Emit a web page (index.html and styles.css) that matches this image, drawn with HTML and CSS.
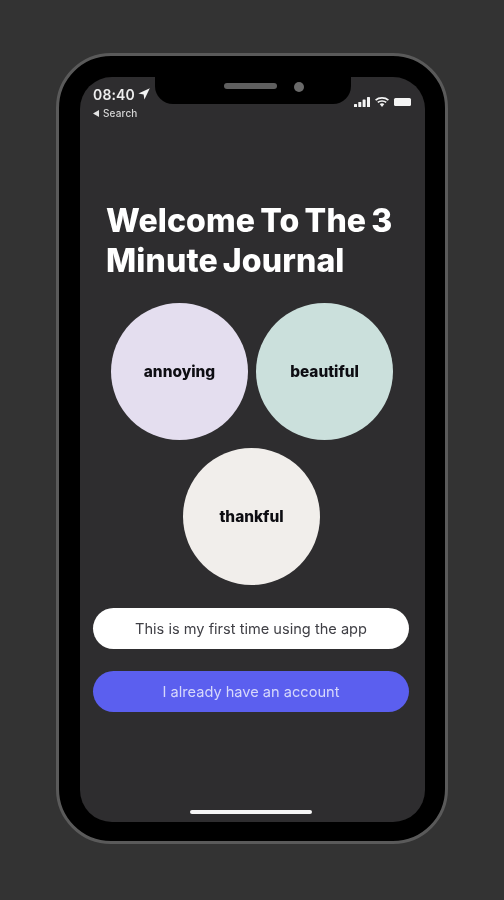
FILE: index.html
```html
<!DOCTYPE html>
<html lang="en">
<head>
<meta charset="utf-8">
<title>3 Minute Journal</title>
<link rel="stylesheet" href="styles.css">
</head>
<body>
<div class="phone">
  <div class="notch">
    <span class="speaker"></span>
    <span class="camera"></span>
  </div>
  <main class="screen">
    <header class="status">
      <div class="status-left">
        <div class="time">08:40
          <svg class="arrow" viewBox="0 0 12 12" width="12" height="12"><path d="M11.8 .2 L.4 5.6 L5.6 6.4 L6.4 11.6 Z" fill="#f4f4f4"/></svg>
        </div>
        <div class="back"><svg viewBox="0 0 6 7" width="6" height="7"><path d="M0 3.5 L6 0 V7 Z" fill="#e4e4e4"/></svg>Search</div>
      </div>
      <div class="status-right">
        <svg viewBox="0 0 16 10" width="16" height="10"><g fill="#f4f4f4"><rect x="0" y="7" width="3" height="3" rx=".6"/><rect x="4.3" y="5" width="3" height="5" rx=".6"/><rect x="8.6" y="2.5" width="3" height="7.5" rx=".6"/><rect x="13" y="0" width="3" height="10" rx=".6"/></g></svg>
        <svg viewBox="0 0 14 10" width="14" height="10"><g fill="none" stroke="#f4f4f4" stroke-width="1.7"><path d="M.6 3.2 C4 .2 10 .2 13.4 3.2"/><path d="M2.8 5.4 C5 3.5 9 3.5 11.2 5.4"/></g><path d="M4.7 7.1 C6 6 8 6 9.3 7.1 L7 10 Z" fill="#f4f4f4"/></svg>
        <span class="battery"></span>
      </div>
    </header>
    <h1 class="title">Welcome To The 3 Minute Journal</h1>
    <section class="bubbles">
      <div class="bubble lilac">annoying</div>
      <div class="bubble mint">beautiful</div>
      <div class="bubble cream">thankful</div>
    </section>
    <section class="actions">
      <button class="btn btn-white">This is my first time using the app</button>
      <button class="btn btn-blue">I already have an account</button>
    </section>
    <div class="home"></div>
  </main>
</div>
</body>
</html>
```
FILE: styles.css
```css
* { box-sizing: border-box; }
html, body { margin: 0; height: 100%; }
body {
  background: #333333;
  font-family: Inter, "Liberation Sans", sans-serif;
  padding: 53px 0 0 56px;
  overflow: hidden;
}
.phone {
  position: relative;
  width: 392px;
  height: 791px;
  padding: 21px 20px 19px 21px;
  background: #000;
  border: 3px solid #5a5a5a;
  border-radius: 55px;
  filter: blur(.35px);
}
.notch {
  position: absolute;
  left: 96px;
  top: 21px;
  width: 196px;
  height: 27px;
  background: #000;
  border-radius: 0 0 18px 18px;
}
.speaker {
  position: absolute;
  left: 69px;
  top: 6px;
  width: 53px;
  height: 6px;
  border-radius: 3px;
  background: #5f5f5f;
}
.camera {
  position: absolute;
  left: 139px;
  top: 5px;
  width: 10px;
  height: 10px;
  border-radius: 50%;
  background: #6a6a6a;
}
.screen {
  display: flex;
  flex-direction: column;
  height: 100%;
  background: #2e2d2f;
  border-radius: 32px;
  overflow: hidden;
}
.status {
  display: flex;
  justify-content: space-between;
  height: 46px;
  padding: 8px 14px 0 13px;
  color: #efefef;
}
.time {
  display: flex;
  align-items: center;
  gap: 3px;
  height: 18px;
  font-size: 14px;
  font-weight: 600;
  letter-spacing: .15px;
}
.back {
  display: flex;
  align-items: center;
  gap: 4px;
  margin-top: 4px;
  font-size: 10px;
  font-weight: 500;
  letter-spacing: .15px;
  color: #d6d6d6;
}
.status-right {
  display: flex;
  align-items: center;
  gap: 5px;
  height: 10px;
  margin-top: 12px;
}
.battery {
  width: 17px;
  height: 8px;
  border-radius: 1.5px;
  background: #f4f4f4;
}
.title {
  margin: 78px 0 0;
  padding: 0 26px;
  font-size: 32px;
  line-height: 40px;
  font-weight: 800;
  letter-spacing: .12px;
  word-spacing: -2px;
  color: #fff;
}
.bubbles {
  display: grid;
  grid-template-columns: 137px 137px;
  justify-content: start;
  gap: 8px;
  margin-top: 22px;
  padding-left: 31px;
}
.bubble {
  display: flex;
  align-items: center;
  justify-content: center;
  height: 137px;
  border-radius: 50%;
  font-size: 15.4px;
  font-weight: 800;
  color: #0d0d12;
}
.lilac { background: #e4deef; }
.mint { background: #cbe0dc; }
.cream {
  grid-column: 1 / -1;
  justify-self: start;
  width: 137px;
  margin-left: 72px;
  background: #f1eeeb;
}
.actions {
  display: flex;
  flex-direction: column;
  gap: 22px;
  margin-top: 23px;
  padding: 0 16px 0 13px;
}
.btn {
  height: 41px;
  border: 0;
  border-radius: 21px;
  font-family: inherit;
  font-size: 14.6px;
}
.btn-white { background: #fff; color: #3f3f45; }
.btn-blue { background: #5b5fef; color: #d6d8fb; }
.home {
  align-self: center;
  width: 122px;
  height: 4px;
  margin-top: auto;
  margin-right: 3px;
  margin-bottom: 8px;
  border-radius: 2px;
  background: #f6f6f6;
}
```
